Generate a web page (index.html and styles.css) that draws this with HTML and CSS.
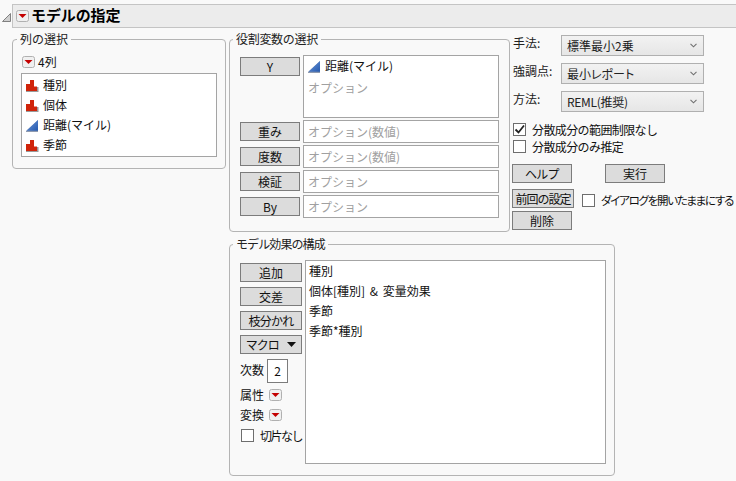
FILE: index.html
```html
<!DOCTYPE html>
<html lang="ja">
<head>
<meta charset="utf-8">
<title>モデルの指定</title>
<link rel="stylesheet" href="styles.css">
</head>
<body>
<svg class="defs" width="0" height="0" aria-hidden="true">
  <symbol id="bars" viewBox="0 0 13 13">
    <path fill="#9a9a9a" d="M0 11.500h12.500V13H0zM11 8h1.500v4H11z"/>
    <path fill="#d0240a" d="M0 5h4v7H0zM4 1h4v11H4zM8 7.500h3V12H8z"/>
  </symbol>
  <symbol id="ramp" viewBox="0 0 13 13">
    <defs><linearGradient id="rampfill" x1="0" y1="0" x2="1" y2="1"><stop offset="0" stop-color="#6f9ade"/><stop offset="1" stop-color="#2458ac"/></linearGradient></defs>
    <path fill="#8f9bb0" d="M0 12 12 1v12H0z"/>
    <path fill="url(#rampfill)" d="M0.500 11.800 12 1v10.800z"/>
  </symbol>
  <symbol id="menu" viewBox="0 0 13 12">
    <rect x=".5" y=".5" width="12" height="11" rx="2" fill="#f0f0f0" stroke="#b0b0b0"/>
    <path fill="#c40000" d="M2.500 4h8L6.500 8z"/>
  </symbol>
  <symbol id="chevron" viewBox="0 0 7 5">
    <path d="M.5 .8l3 3 3-3" fill="none" stroke="#707070" stroke-width="1.100"/>
  </symbol>
</svg>
<header class="outline">
  <svg class="disclosure" width="9" height="9" viewBox="0 0 9 9"><path d="M8.500.5v8H.5z" fill="#d0d0d0" stroke="#808080"/></svg>
  <div class="title-bar">
    <svg class="menu-icon"><use href="#menu"/></svg>
    <h1 class="title">モデルの指定</h1>
  </div>
</header>
<main class="dialog">
  <div class="top-row">
    <fieldset class="group group-cols">
      <legend class="legend legend-cols">列の選択</legend>
      <div class="col-head"><svg class="menu-icon"><use href="#menu"/></svg><span>4列</span></div>
      <ul class="listbox">
        <li class="col-item"><svg class="type-icon"><use href="#bars"/></svg>種別</li>
        <li class="col-item"><svg class="type-icon"><use href="#bars"/></svg>個体</li>
        <li class="col-item"><svg class="type-icon"><use href="#ramp"/></svg>距離(マイル)</li>
        <li class="col-item"><svg class="type-icon"><use href="#bars"/></svg>季節</li>
      </ul>
    </fieldset>
    <fieldset class="group group-roles">
      <legend class="legend legend-wide">役割変数の選択</legend>
      <div class="role role-y">
        <button class="btn btn-role">Y</button>
        <div class="field field-tall">
          <div class="col-item"><svg class="type-icon"><use href="#ramp"/></svg>距離(マイル)</div>
          <div class="hint hint-y">オプション</div>
        </div>
      </div>
      <div class="role"><button class="btn btn-role">重み</button><div class="field hint">オプション(数値)</div></div>
      <div class="role"><button class="btn btn-role">度数</button><div class="field hint">オプション(数値)</div></div>
      <div class="role"><button class="btn btn-role">検証</button><div class="field hint">オプション</div></div>
      <div class="role"><button class="btn btn-role">By</button><div class="field hint">オプション</div></div>
    </fieldset>
    <aside class="options">
      <div class="opt-row"><span class="opt-label">手法:</span><div class="select">標準最小2乗<svg class="chev"><use href="#chevron"/></svg></div></div>
      <div class="opt-row"><span class="opt-label">強調点:</span><div class="select"><span class="narrow">最小レポート</span><svg class="chev"><use href="#chevron"/></svg></div></div>
      <div class="opt-row"><span class="opt-label">方法:</span><div class="select"><span class="latin">REML(推奨)</span><svg class="chev"><use href="#chevron"/></svg></div></div>
      <label class="check check-first"><span class="box"><svg width="11" height="11" viewBox="0 0 11 11"><path d="M1.500 5.500l3 3 5.500-7" fill="none" stroke="#222" stroke-width="1.800"/></svg></span><span class="tight">分散成分の範囲制限なし</span></label>
      <label class="check"><span class="box"></span><span class="tight">分散成分のみ推定</span></label>
      <div class="action-row action-first"><button class="btn btn-action narrow">ヘルプ</button><button class="btn btn-action btn-run">実行</button></div>
      <div class="action-row action-recall"><button class="btn btn-recall">前回の設定</button><label class="check check-keep"><span class="box"></span><span class="keep-text">ダイアログを開いたままにする</span></label></div>
      <div class="action-row action-last"><button class="btn btn-action">削除</button></div>
    </aside>
  </div>
  <fieldset class="group group-model">
    <legend class="legend legend-wide legend-model">モデル効果の構成</legend>
    <div class="model-body">
      <div class="model-tools">
        <button class="btn btn-model">追加</button>
        <button class="btn btn-model">交差</button>
        <button class="btn btn-model btn-branch">枝分かれ</button>
        <button class="btn btn-model"><span class="narrow">マクロ</span><svg class="caret" width="9" height="5" viewBox="0 0 9 5"><path d="M0 0h9L4.500 5z" fill="#111"/></svg></button>
        <div class="degree"><span class="degree-label">次数</span><span class="degree-box">2</span></div>
        <div class="tool-line"><span>属性</span><svg class="menu-icon"><use href="#menu"/></svg></div>
        <div class="tool-line"><span>変換</span><svg class="menu-icon"><use href="#menu"/></svg></div>
        <label class="check check-nocut"><span class="box"></span><span class="nocut-text">切片なし</span></label>
      </div>
      <ul class="effects">
        <li class="effect">種別</li>
        <li class="effect effect-spaced">個体[種別] &amp; 変量効果</li>
        <li class="effect">季節</li>
        <li class="effect">季節*種別</li>
      </ul>
    </div>
  </fieldset>
</main>
</body>
</html>
```
FILE: styles.css
```css
* { box-sizing: border-box; }
html, body { margin: 0; height: 100%; }
body {
  width: 736px;
  height: 481px;
  overflow: hidden;
  background: #f9f9f9;
  color: #111;
  font: 12px/16px "Noto Sans CJK JP", "Liberation Sans", sans-serif;
  padding-top: 4px;
}
ul { list-style: none; margin: 0; padding: 0; }
.defs { display: block; height: 0; width: 0; }

.outline { display: flex; align-items: center; height: 24px; padding-left: 2px; }
.disclosure { flex: none; margin-right: 1px; margin-top: 2px; }
.title-bar {
  flex: 1;
  height: 24px;
  display: flex;
  align-items: center;
  padding: 0 0 1px 3px;
  background: #ececec;
  border: 1px solid #c4c4c4;
  border-right: 0;
}
.title { margin: 0 0 1px; font-size: 15px; font-weight: 700; line-height: 20px; color: #000; padding-left: 2px; letter-spacing: -.1px; }
.menu-icon { flex: none; width: 13px; height: 12px; display: block; }

.dialog { padding: 4px 0 0 12px; }
.top-row { display: flex; align-items: flex-start; }

.group {
  margin: 0;
  min-width: 0;
  border: 1px solid #b4b4b4;
  border-radius: 4px;
  background: #f9f9f9;
}
.legend { padding: 0 3px; font-size: 12px; line-height: 14px; height: 14px; color: #222; }
.legend-cols { margin-left: -4px; }
.legend-wide { margin-left: -7px; letter-spacing: -.3px; }
.legend-model { letter-spacing: -.9px; }

.group-cols { width: 214px; height: 137px; padding: 9px 8px 0; }
.col-head { display: flex; align-items: center; gap: 3px; height: 14px; margin-left: 1px; }
.listbox { height: 84px; margin-top: 4px; border: 1px solid #a4a4a4; background: #fff; padding: 1px 0 0 4px; width: 196px; }
.col-item { display: flex; align-items: center; gap: 4px; height: 20px; }
.type-icon { flex: none; width: 13px; height: 13px; display: block; }

.group-roles { width: 281px; height: 200px; margin-left: 3px; padding: 9px 9px 0 10px; }
.role { display: flex; height: 25px; gap: 3px; }
.role-y { height: 65px; }
.btn {
  display: flex;
  align-items: center;
  justify-content: center;
  padding: 0;
  font: inherit;
  color: #111;
  background: #dcdcdc;
  border: 1px solid #7c7c7c;
  height: 19px;
}
.btn-role { width: 60px; margin-top: 2px; flex: none; }
.field { width: 196px; height: 23px; border: 1px solid #a4a4a4; background: #fff; padding: 3px 0 0 4px; }
.field-tall { height: 63px; padding-top: 0; }
.hint { color: #a0a0a0; }
.hint-y { height: 20px; line-height: 20px; margin-top: 2px; }

.options { width: 224px; margin-left: 2px; padding-top: 3px; }
.opt-row { display: flex; align-items: flex-start; height: 28px; padding-left: 1px; }
.opt-label { width: 48px; line-height: 14px; padding-top: 1px; color: #222; flex: none; }
.select {
  width: 143px;
  height: 21px;
  display: flex;
  align-items: center;
  justify-content: space-between;
  padding: 0 6px 0 5px;
  border: 1px solid #b0b0b0;
  background: linear-gradient(#f2f2f2, #e6e6e6);
  color: #222;
}
.chev { flex: none; width: 7px; height: 5px; display: block; }
.narrow { font-feature-settings: "palt"; }
.latin { letter-spacing: -.3px; }
.check { display: flex; align-items: center; gap: 6px; height: 17px; }
.check-first { margin: 2px 0 0 1px; }
.check-first + .check { margin-left: 1px; }
.box { flex: none; width: 13px; height: 13px; border: 1px solid #6e6e6e; background: #fff; display: flex; align-items: center; justify-content: center; }
.tight { letter-spacing: -.6px; }
.action-row { display: flex; align-items: center; height: 25px; }
.action-first { margin-top: 6px; }
.action-last { height: 19px; }
.btn-action { width: 60px; }
.btn-run { margin-left: 33px; }
.btn-recall { width: 62px; flex: none; white-space: nowrap; letter-spacing: -1px; }
.check-keep { margin-left: 8px; margin-top: 3px; }
.keep-text { font-size: 11.500px; font-feature-settings: "palt"; white-space: nowrap; letter-spacing: -1.260px; }

.group-model { width: 386px; height: 239px; margin: 5px 0 0 217px; padding: 9px 8px 0 10px; }
.model-body { display: flex; gap: 3px; }
.model-tools { width: 62px; flex: none; }
.btn-model { width: 62px; margin: 3px 0 5px; gap: 7px; }
.btn-branch { letter-spacing: -.7px; }
.degree { display: flex; align-items: center; gap: 3px; height: 24px; margin-top: 1px; white-space: nowrap; }
.degree-label { margin-bottom: 3px; }
.degree-box { width: 21px; height: 24px; border: 1px solid #7c7c7c; background: #fff; display: flex; align-items: center; justify-content: center; }
.tool-line { display: flex; align-items: center; gap: 5px; height: 16px; margin-top: 4px; }
.check-nocut { margin: 4px 0 0 1px; white-space: nowrap; }
.nocut-text { letter-spacing: -1.500px; }
.effects { width: 301px; height: 204px; border: 1px solid #a4a4a4; background: #fff; padding: 0 0 0 3px; }
.effect { height: 20px; line-height: 20px; }
.effect-spaced { word-spacing: 2px; }
```
